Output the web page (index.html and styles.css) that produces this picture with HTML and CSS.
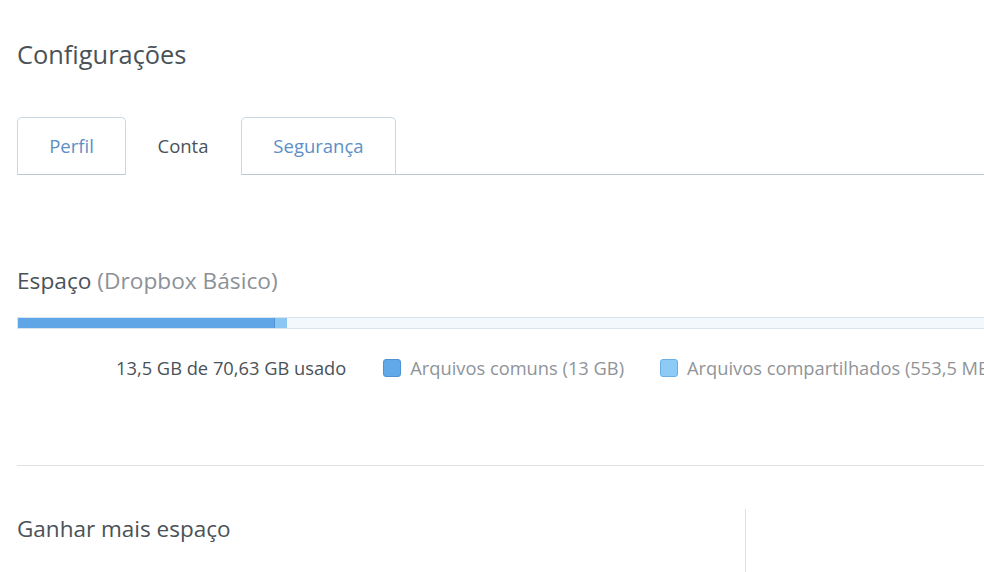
FILE: index.html
```html
<!DOCTYPE html>
<html lang="pt">
<head>
<meta charset="utf-8">
<link rel="stylesheet" href="styles.css">
</head>
<body>
<div class="page">
  <h1 class="title">Configurações</h1>
  <div class="tabs">
    <div class="tab">Perfil</div>
    <div class="tab active">Conta</div>
    <div class="tab tab-wide">Segurança</div>
    <div class="tab-rest"></div>
  </div>
  <section class="space">
    <h2 class="space-title">Espaço <span class="muted">(Dropbox Básico)</span></h2>
    <div class="bar">
      <div class="bar-fill" style="width:257px"></div>
      <div class="bar-shared" style="width:12px"></div>
    </div>
    <div class="legend">
      <span class="used">13,5 GB de 70,63 GB usado</span>
      <span class="key"><span class="swatch"></span>Arquivos comuns (13 GB)</span>
      <span class="key"><span class="swatch swatch-shared"></span>Arquivos compartilhados (553,5 MB)</span>
    </div>
  </section>
  <div class="divider"></div>
  <div class="more">
    <h2 class="more-title">Ganhar mais espaço</h2>
    <div class="more-side"></div>
  </div>
</div>
</body>
</html>
```
FILE: styles.css
```css
html, body {
  margin: 0;
  padding: 0;
  background: #ffffff;
  overflow: hidden;
}
body {
  font-family: "Open Sans", "Noto Sans", sans-serif;
  color: #3d464d;
  width: 984px;
  height: 572px;
}
.page {
  padding-left: 17px;
  padding-top: 36px;
  white-space: nowrap;
}
.title {
  margin: 0;
  font-size: 25.4px;
  font-weight: 400;
  line-height: 36px;
  color: #4a5258;
}
.tabs {
  display: flex;
  margin-top: 45px;
  height: 58px;
}
.tab {
  box-sizing: border-box;
  width: 109px;
  height: 58px;
  border: 1px solid #c9d8e4;
  border-bottom: 1px solid #bfc6cc;
  border-radius: 5px 5px 0 0;
  display: flex;
  align-items: center;
  justify-content: center;
  font-size: 18.5px;
  color: #5c8fc6;
  padding-bottom: 1px;
}
.tab + .tab {
  border-left: none;
}
.tab.active {
  width: 115px;
  border-color: transparent;
  border-bottom-color: transparent;
  color: #4a5258;
}
.tab.active + .tab {
  border-left: 1px solid #c9d8e4;
}
.tab.tab-wide {
  width: 155px;
}
.tab-rest {
  flex: 1;
  border-bottom: 1px solid #bfc6cc;
}
.space {
  padding-top: 86px;
}
.space-title {
  margin: 0;
  font-size: 22.7px;
  font-weight: 400;
  line-height: 40px;
  color: #4a5258;
}
.muted {
  color: #8c9197;
}
.bar {
  margin-top: 16px;
  box-sizing: border-box;
  height: 12px;
  border: 1px solid #d8e5ee;
  border-right: none;
  background: #f3f8fc;
  display: flex;
}
.bar-fill {
  background: #5ea6e6;
  border-right: 1px solid #4e94d6;
  box-sizing: border-box;
}
.bar-shared {
  background: #8cc7f4;
}
.legend {
  display: flex;
  align-items: center;
  margin-top: 25px;
  padding-left: 99px;
  font-size: 18.3px;
  line-height: 28px;
}
.used {
  color: #4a5258;
  margin-right: 37px;
}
.key {
  display: flex;
  align-items: center;
  color: #8f9499;
  margin-right: 36px;
}
.swatch {
  box-sizing: border-box;
  width: 18px;
  height: 18px;
  border-radius: 3px;
  background: #62a9ea;
  border: 1px solid #4c91d2;
  margin-right: 9px;
}
.swatch-shared {
  background: #8ccbf6;
  border-color: #6aaee2;
}
.divider {
  margin-top: 83px;
  height: 1px;
  background: #dfe3e6;
}
.more {
  display: flex;
  height: 106px;
}
.more-title {
  margin: 0;
  width: 728px;
  padding-top: 46px;
  font-size: 22.5px;
  font-weight: 400;
  line-height: 34px;
  color: #4a5258;
}
.more-side {
  margin-top: 43px;
  border-left: 1px solid #d7e2ea;
  flex: 1;
}
```
